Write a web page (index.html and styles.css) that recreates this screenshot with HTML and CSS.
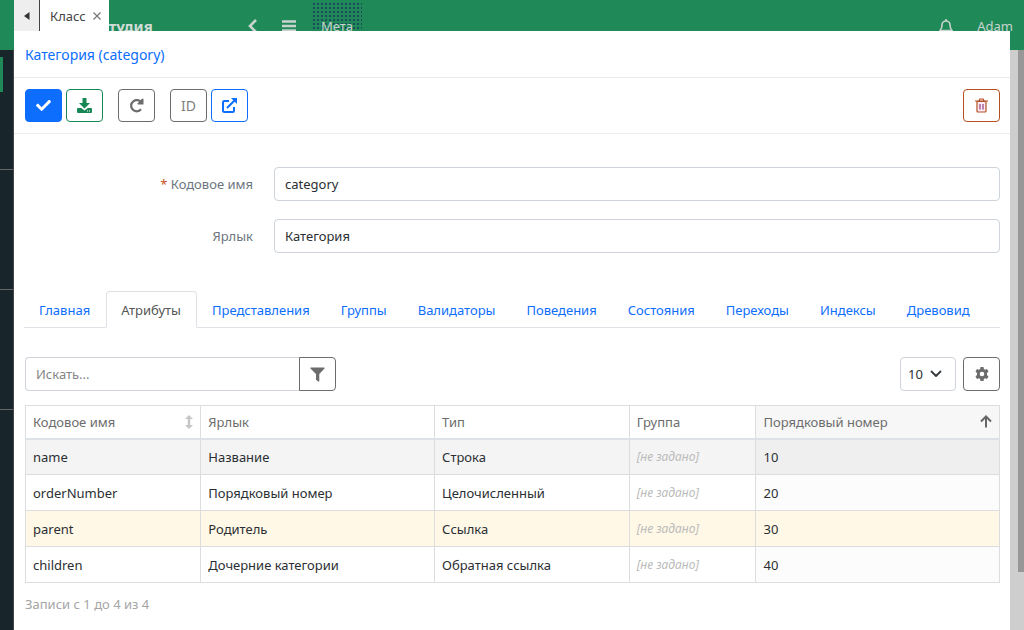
FILE: index.html
```html
<!DOCTYPE html>
<html lang="ru">
<head>
<meta charset="utf-8">
<title>Категория (category)</title>
<link rel="stylesheet" href="styles.css">
</head>
<body>
<div class="app">
  <header class="topbar">
    <strong class="brand">Студия</strong>
    <button class="top-btn back" aria-label="Назад"><svg width="10" height="14" viewBox="0 0 10 14"><path d="M8 1 2 7l6 6" fill="none" stroke="currentColor" stroke-width="2.600"/></svg></button>
    <button class="top-btn menu" aria-label="Меню"><svg width="14" height="12" viewBox="0 0 14 12"><path d="M0 1.500h14M0 6h14M0 10.500h14" stroke="currentColor" stroke-width="2.400"/></svg></button>
    <a class="top-link" href="#">Мета</a>
    <button class="top-btn bell" aria-label="Уведомления"><svg width="14" height="15" viewBox="0 0 14 15"><path d="M7 0v2M1 11.500c1.500-1.500 2-2.500 2-5.500a4 4 0 0 1 8 0c0 3 .5 4 2 5.500zM5.500 13.500h3" fill="none" stroke="currentColor" stroke-width="1.600"/></svg></button>
    <a class="user" href="#">Adam</a>
  </header>
  <div class="app-body">
    <nav class="sidebar"><span class="side-mark"></span><span class="side-item"></span><span class="side-item"></span><span class="side-item"></span></nav>
    <div class="scrollbar"><div class="thumb"></div></div>
  </div>
</div>

<div class="frame">
  <div class="frame-tabs">
    <button class="frame-prev" aria-label="Предыдущая"><svg width="6" height="8" viewBox="0 0 6 8"><path d="M5.500 0v8L0 4z" fill="#333"/></svg></button>
    <div class="frame-tab"><span>Класс</span><button class="frame-close" aria-label="Закрыть"><svg width="8" height="8" viewBox="0 0 8 8"><path d="m.5.5 7 7m0-7-7 7" stroke="#777" stroke-width="1.200"/></svg></button></div>
  </div>
  <main class="panel">
    <h1 class="title"><a href="#">Категория (category)</a></h1>
    <div class="toolbar">
      <button class="btn primary" aria-label="Сохранить и закрыть"><svg width="15" height="15" viewBox="0 0 512 512"><path fill="currentColor" d="M174 439 7 272c-10-10-10-26 0-36l36-36c10-10 26-10 36 0l113 113L433 72c10-10 26-10 36 0l36 36c10 10 10 26 0 36L210 439c-10 10-26 10-36 0z"/></svg></button>
      <button class="btn success" aria-label="Сохранить"><svg width="15" height="15" viewBox="0 0 15 15"><path fill="currentColor" d="M5.500 0h4v5H13L7.500 10.500 2 5h3.500zM1 10h3.200l3.300 2.500 3.300-2.500H14q1 0 1 1v3q0 1-1 1H1q-1 0-1-1v-3q0-1 1-1z"/><path fill="#fff" d="M10 12.500h1v1h-1zm2 0h1v1h-1z"/></svg></button>
      <button class="btn spaced" aria-label="Обновить"><svg width="15" height="15" viewBox="0 0 15 15"><path d="M12.500 4.800A5.600 5.600 0 1 0 12 11.300" fill="none" stroke="currentColor" stroke-width="2.200"/><path d="M14.500.8v5.700H8.800V5.300L13 .8z" fill="currentColor"/></svg></button>
      <button class="btn spaced id">ID</button>
      <button class="btn link" aria-label="Открыть"><svg width="15" height="15" viewBox="0 0 15 15"><path d="M7 3H2.500Q1 3 1 4.500v8Q1 14 2.500 14h8q1.500 0 1.500-1.500V9M5 10l7.500-7.500" fill="none" stroke="currentColor" stroke-width="2"/><path d="M9 0h6v6z" fill="currentColor"/></svg></button>
      <button class="btn danger" aria-label="Удалить"><svg width="13" height="15" viewBox="0 0 13 15"><path d="M2 3.500h9V13q0 1-1 1H3q-1 0-1-1zM0 3h13M4 3l.8-2h3.400L9 3" fill="#faeafa" stroke="currentColor" stroke-width="1.200"/><path d="M5 6v5.500M8 6v5.500" stroke="#96407c" stroke-width="1.200"/></svg></button>
    </div>

    <form class="form">
      <label class="label" for="code"><span class="req">*</span> Кодовое имя</label>
      <input class="input" id="code" value="category">
      <label class="label" for="caption">Ярлык</label>
      <input class="input" id="caption" value="Категория">
    </form>

    <nav class="tabs">
      <a class="tab" href="#">Главная</a><a class="tab active" href="#">Атрибуты</a><a class="tab" href="#">Представления</a><a class="tab" href="#">Группы</a><a class="tab" href="#">Валидаторы</a><a class="tab" href="#">Поведения</a><a class="tab" href="#">Состояния</a><a class="tab" href="#">Переходы</a><a class="tab" href="#">Индексы</a><a class="tab" href="#">Древовид</a>
    </nav>

    <div class="grid-tools">
      <div class="search">
        <input class="input search-input" type="text" placeholder="Искать..." aria-label="Искать">
        <button class="btn filter" aria-label="Фильтр"><svg width="15" height="15" viewBox="0 0 15 15"><path fill="currentColor" d="M.8.5h13.400q.8.300.3 1L9.300 7v7q-.2 1-1 .5l-2.300-1.700V7L.5 1.500q-.4-.7.300-1z"/></svg></button>
      </div>
      <div class="size-wrap">
        <select class="size" aria-label="Записей на странице"><option>10</option></select>
        <svg class="size-arrow" width="12" height="8" viewBox="0 0 12 8"><path d="m1.500 1.500 4.500 4.500 4.500-4.500" fill="none" stroke="#343a40" stroke-width="1.800" stroke-linecap="round" stroke-linejoin="round"/></svg>
      </div>
      <button class="btn" aria-label="Настройки"><svg width="14" height="14" viewBox="0 0 14 14"><path fill="currentColor" fill-rule="evenodd" d="M5.500 0h3l.4 2 1.200.7 1.900-.7 1.500 2.600-1.500 1.300v2.200l1.500 1.300L12 12l-1.900-.7-1.200.7-.4 2h-3l-.4-2-1.200-.7L2 12 .5 9.400 2 8.100V5.900L.5 4.600 2 2l1.900.7L5.100 2zM7 4.700a2.300 2.300 0 1 0 0 4.600 2.300 2.300 0 0 0 0-4.600z"/></svg></button>
    </div>

    <table class="grid">
      <colgroup><col class="c1"><col class="c2"><col class="c3"><col class="c4"><col class="c5"></colgroup>
      <thead>
        <tr>
          <th><div class="th"><span>Кодовое имя</span><svg width="8" height="14" viewBox="0 0 8 14"><path fill="#c6c6c6" d="m4 0 4 4H5.200v6H8l-4 4-4-4h2.800V4H0z"/></svg></div></th>
          <th>Ярлык</th><th>Тип</th><th>Группа</th>
          <th class="sorted"><div class="th"><span>Порядковый номер</span><svg width="12" height="13" viewBox="0 0 12 13"><path d="M6 12.500V1.500M1 6.500l5-5 5 5" fill="none" stroke="#666" stroke-width="2"/></svg></div></th>
        </tr>
      </thead>
      <tbody>
        <tr class="hover"><td>name</td><td>Название</td><td>Строка</td><td><i>[не задано]</i></td><td class="sorted">10</td></tr>
        <tr><td>orderNumber</td><td>Порядковый номер</td><td>Целочисленный</td><td><i>[не задано]</i></td><td class="sorted">20</td></tr>
        <tr class="marked"><td>parent</td><td>Родитель</td><td>Ссылка</td><td><i>[не задано]</i></td><td class="sorted">30</td></tr>
        <tr><td>children</td><td>Дочерние категории</td><td>Обратная ссылка</td><td><i>[не задано]</i></td><td class="sorted">40</td></tr>
      </tbody>
    </table>
    <p class="info">Записи с 1 до 4 из 4</p>
  </main>
</div>
</body>
</html>
```
FILE: styles.css
```css
* { box-sizing: border-box; }
html, body { height: 100%; }
body {
  margin: 0;
  overflow: hidden;
  font: 13px/20px "Noto Sans", "Open Sans", sans-serif;
  color: #2b2f33;
}
button, input, select { font: inherit; color: inherit; margin: 0; }
a { text-decoration: none; color: #0d6efd; }
svg { display: block; flex: none; }

.app { display: flex; flex-direction: column; height: 100vh; background: #cecece; }
.topbar {
  display: flex;
  align-items: center;
  height: 50px;
  padding: 2px 11px 0 99px;
  background: #1f8a58;
  color: #d2dcd7;
}
.brand { width: 149px; font-size: 15px; }
.top-btn { padding: 0; border: 0; background: none; color: #c8d3ce; }
.menu { margin-left: 24px; }
.top-link {
  align-self: stretch;
  margin-left: 16px;
  padding: 14px 9px 0;
  color: #c8d3ce;
  background: radial-gradient(#1c4a60 1px, transparent 1px) 0 0 / 4px 4px;
}
.bell { margin-left: auto; margin-right: 24px; }
.user { color: #c8d3ce; }
.app-body { flex: 1; display: flex; justify-content: space-between; }
.sidebar {
  display: flex;
  flex-direction: column;
  width: 14px;
  background: #18252a;
  border-right: 1px solid #444;
}
.side-mark { width: 3px; height: 35px; margin-top: 7px; margin-bottom: -42px; background: #1f8a58; }
.side-item { height: 120px; border-bottom: 1px solid #666; }
.scrollbar { width: 6px; background: #cecece; }
.thumb { height: 90%; background: #979797; }

.frame {
  position: fixed;
  inset: 0 14px 0 14px;
  display: flex;
  flex-direction: column;
}
.frame-tabs { display: flex; height: 31px; }
.frame-prev {
  display: flex;
  align-items: center;
  justify-content: center;
  width: 26px;
  padding: 0;
  border: 0;
  border-right: 1px solid #444;
  background: #eee;
}
.frame-tab {
  display: flex;
  align-items: center;
  gap: 7px;
  padding: 0 8px 0 10px;
  background: #fff;
  color: #444;
}
.frame-close { padding: 0; border: 0; background: none; }
.panel { flex: 1; background: #fff; }

.title {
  margin: 0;
  padding: 14px 11px 12px;
  font-size: 14px;
  font-weight: 400;
  line-height: 20px;
  border-bottom: 1px solid #e9e9e9;
}
.toolbar {
  display: flex;
  gap: 4px;
  padding: 11px 10px 11px 11px;
  border-bottom: 1px solid #ececec;
}
.btn {
  display: flex;
  align-items: center;
  justify-content: center;
  width: 37px;
  height: 34px;
  padding: 0;
  border: 1px solid #6c6c6c;
  border-radius: 4px;
  background: #fff;
  color: #6c6c6c;
}
.toolbar .btn { height: 33px; }
.toolbar .primary { background: #0d6efd; border-color: #0d6efd; color: #fff; }
.success { border-color: #198754; color: #198754; }
.link { border-color: #0d6efd; color: #0d6efd; }
.danger { margin-left: auto; border-color: #b5501f; color: #b5501f; }
.spaced { margin-left: 11px; }
.id { font-size: 14px; color: #808080; }

.form {
  display: grid;
  grid-template-columns: 228px 1fr;
  gap: 18px 21px;
  align-items: center;
  padding: 33px 10px 38px 11px;
}
.label { text-align: right; color: #6c757d; }
.req { color: #c8501e; }
.input {
  width: 100%;
  height: 34px;
  padding: 2px 10px;
  border: 1px solid #ced4da;
  border-radius: 4px;
  background: #fff;
  outline: 0;
}
.input::placeholder { color: #868686; opacity: 1; }

.tabs { display: flex; margin: 0 10px; border-bottom: 1px solid #dee2e6; }
.tab {
  margin-bottom: -1px;
  padding: 8px 15px 7px 14px;
  border: 1px solid transparent;
  border-radius: 4px 4px 0 0;
}
.active { color: #555; background: #fff; border-color: #dee2e6 #dee2e6 #fff; }

.grid-tools { display: flex; padding: 29px 10px 14px 11px; }
.search { display: flex; width: 311px; margin-right: auto; }
.search-input { flex: 1; min-width: 0; border-right: 0; border-radius: 4px 0 0 4px; }
.filter { border-radius: 0 4px 4px 0; }
.size-wrap { position: relative; margin-right: 7px; }
.size {
  appearance: none;
  width: 56px;
  height: 34px;
  padding: 0 7px;
  border: 1px solid #ced4da;
  border-radius: 4px;
  background: #fff;
}
.size-arrow { position: absolute; right: 14px; top: 13px; pointer-events: none; }

.grid {
  width: calc(100% - 21px);
  margin: 0 10px 0 11px;
  border-collapse: collapse;
  table-layout: fixed;
}
.c1 { width: 18%; }
.c2 { width: 24%; }
.c3 { width: 20%; }
.c4 { width: 13%; }
.c5 { width: 25%; }
.grid th, .grid td {
  height: 36px;
  padding: 0 7px;
  border: 1px solid #dcdddf;
  text-align: left;
  font-weight: 400;
}
.grid th { height: 33px; color: #6c6c6c; border-bottom: 2px solid #dee2e6; }
.th { display: flex; align-items: center; justify-content: space-between; }
.grid th.sorted { background: #f7f7f7; }
.grid td.sorted { background: #fcfcfc; }
.grid .hover td { background: #f4f4f4; }
.grid .hover td.sorted { background: #efefef; }
.grid .marked td { background: #fff8e6; }
.grid i { color: #bbb; font-size: 12px; }
.info { margin: 11px; color: #a5a5a5; }
```
